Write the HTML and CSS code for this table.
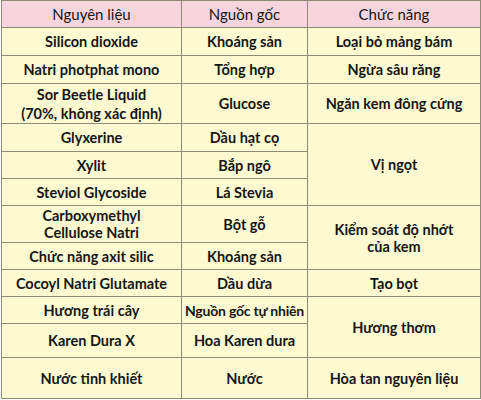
FILE: index.html
```html
<!DOCTYPE html>
<html lang="vi">
<head>
<meta charset="utf-8">
<link rel="stylesheet" href="styles.css">
</head>
<body>
<div class="wrap">
<table class="tbl">
<colgroup><col class="c1"><col class="c2"><col class="c3"></colgroup>
<thead>
<tr class="h27"><th>Nguyên liệu</th><th>Nguồn gốc</th><th>Chức năng</th></tr>
</thead>
<tbody>
<tr class="h28"><td>Silicon dioxide</td><td>Khoáng sản</td><td>Loại bỏ mảng bám</td></tr>
<tr class="h28"><td>Natri photphat mono</td><td>Tổng hợp</td><td>Ngừa sâu răng</td></tr>
<tr class="h40"><td class="two">Sor Beetle Liquid<br>(70%, không xác định)</td><td>Glucose</td><td>Ngăn kem đông cứng</td></tr>
<tr class="h28"><td>Glyxerine</td><td>Dầu hạt cọ</td><td rowspan="3">Vị ngọt</td></tr>
<tr class="h27"><td>Xylit</td><td>Bắp ngô</td></tr>
<tr class="h27"><td>Steviol Glycoside</td><td>Lá Stevia</td></tr>
<tr class="h37"><td>Carboxymethyl<br>Cellulose Natri</td><td>Bột gỗ</td><td rowspan="2" class="up">Kiểm soát độ nhớt<br>của kem</td></tr>
<tr class="h27"><td>Chức năng axit silic</td><td>Khoáng sản</td></tr>
<tr class="h27"><td>Cocoyl Natri Glutamate</td><td>Dầu dừa</td><td>Tạo bọt</td></tr>
<tr class="h27"><td>Hương trái cây</td><td class="tight">Nguồn gốc tự nhiên</td><td rowspan="2">Hương thơm</td></tr>
<tr class="h34"><td>Karen Dura X</td><td>Hoa Karen dura</td></tr>
<tr class="h41"><td class="up">Nước tinh khiết</td><td>Nước</td><td>Hòa tan nguyên liệu</td></tr>
</tbody>
</table>
</div>
</body>
</html>
```
FILE: styles.css
```css
html, body {
  margin: 0;
  padding: 0;
  background: #ffffff;
}
.wrap {
  padding: 0 1px 0 1px;
}
.tbl {
  border-collapse: collapse;
  width: 479px;
  table-layout: fixed;
  font-family: Lato, "Open Sans", sans-serif;
  font-size: 14.5px;
  line-height: 17px;
  color: #161616;
}
.c1 { width: 180px; }
.c2 { width: 126px; }
.c3 { width: 173px; }
.tbl th, .tbl td {
  border: 1px solid #8d8b76;
  text-align: center;
  vertical-align: middle;
  padding: 0;
  background: #fdfad2;
  font-weight: 700;
  white-space: nowrap;
  overflow: hidden;
}
.tbl th {
  background: #f8d4df;
  font-weight: 400;
  font-size: 15px;
}
.tbl td.tight {
  letter-spacing: -0.2px;
  font-size: 14px;
}
.h27 { height: 27px; }
.h28 { height: 28px; }
.h34 { height: 34px; }
.h37 { height: 37px; }
.h40 { height: 40px; }
.h41 { height: 41px; }
.two { line-height: 19px; }
.up { padding-bottom: 4px; }
```
